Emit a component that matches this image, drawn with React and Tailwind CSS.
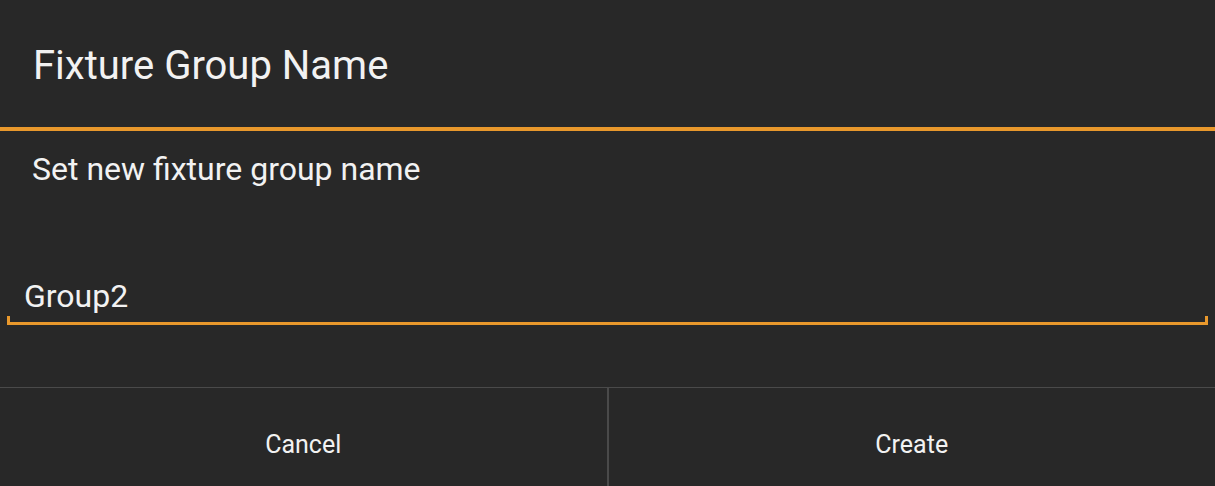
export default function App() {
  return (
    <div className="w-[1215px] h-[486px] bg-[#282828] flex flex-col text-[#f2f2f2] overflow-hidden" style={{ fontFamily: 'Roboto, "Noto Sans", sans-serif' }}>
      <div className="h-[127px] shrink-0 pl-[33px] pt-[46px]">
        <div className="text-[40px] leading-none">Fixture Group Name</div>
      </div>
      <div className="h-[4px] shrink-0 bg-[#e8982c]" />
      <div className="h-[256px] shrink-0 flex flex-col">
        <div className="pl-[32px] pt-[22px] text-[32px] leading-none">Set new fixture group name</div>
        <div className="mt-[95px] px-[7px]">
          <div className="pl-[17px] text-[32px] leading-none">Group2</div>
          <div className="mt-[4px] h-[9px] border-x-[3px] border-b-[3px] border-[#e8982c]" />
        </div>
      </div>
      <div className="h-[1px] shrink-0 bg-[#4a4a4a]" />
      <div className="flex-1 flex">
        <div className="flex-1 flex justify-center pt-[44px] text-[25px] leading-none">Cancel</div>
        <div className="w-[2px] bg-[#4a4a4a]" />
        <div className="flex-1 flex justify-center pt-[44px] text-[25px] leading-none">Create</div>
      </div>
    </div>
  );
}
